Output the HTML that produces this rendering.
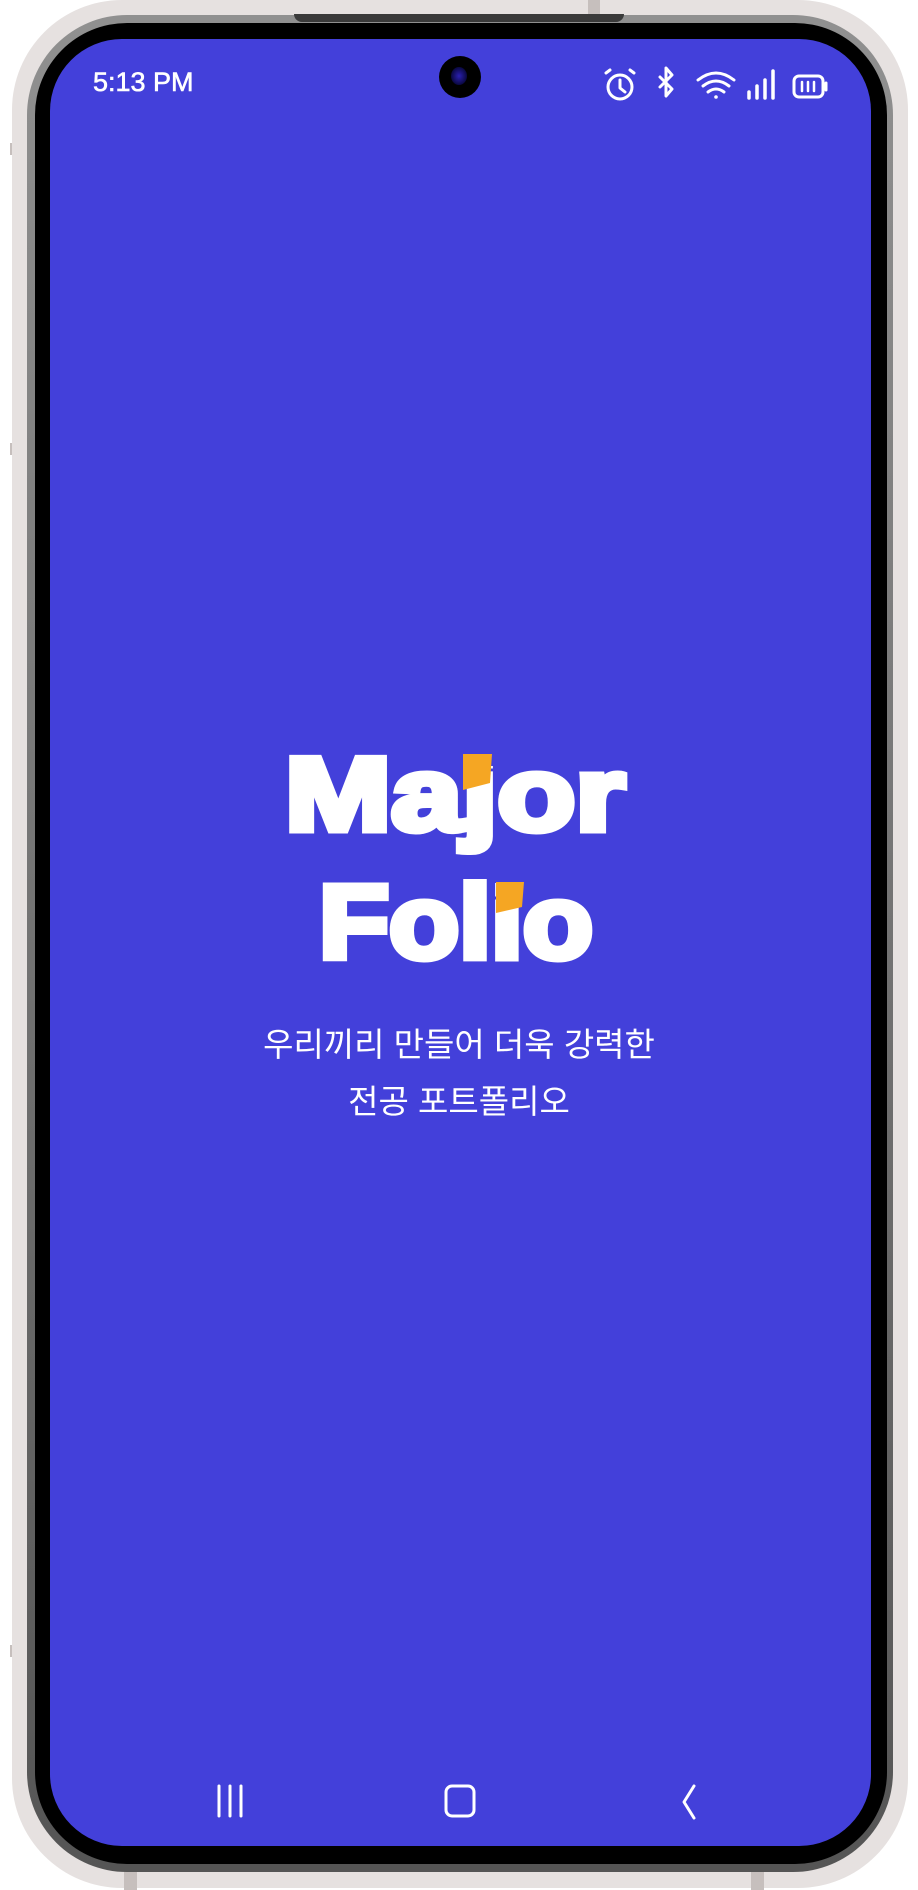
<!DOCTYPE html>
<html><head><meta charset="utf-8"><style>
html,body{margin:0;padding:0;background:#fff;}
body{width:918px;height:1890px;position:relative;overflow:hidden;font-family:"Liberation Sans","Noto Sans CJK KR",sans-serif;}
.a{position:absolute;}
</style></head><body>
<div class="a" style="left:10px;top:143px;width:18px;height:12px;background:#c6bfbd"></div>
<div class="a" style="left:10px;top:443px;width:18px;height:12px;background:#c6bfbd"></div>
<div class="a" style="left:10px;top:1645px;width:18px;height:12px;background:#c6bfbd"></div>
<div class="a" style="left:894px;top:480px;width:14px;height:236px;background:#b5adab;border-radius:3px"></div>
<div class="a" style="left:894px;top:816px;width:14px;height:120px;background:#b5adab;border-radius:3px"></div>
<div class="a" style="left:12px;top:0;width:896px;height:1888px;background:#e6e1e0;border-radius:110px"></div>
<div class="a" style="left:588px;top:0;width:12px;height:16px;background:#c6bfbd"></div>
<div class="a" style="left:124px;top:1870px;width:13px;height:20px;background:#c6bfbd"></div>
<div class="a" style="left:751px;top:1870px;width:13px;height:20px;background:#c6bfbd"></div>
<div class="a" style="left:27px;top:15px;width:866px;height:1857px;background:linear-gradient(#909090,#555);border-radius:100px"></div>
<div class="a" style="left:294px;top:14px;width:330px;height:8px;background:#3a3a3a;border-radius:0 0 14px 14px"></div>
<div class="a" style="left:35px;top:23px;width:852px;height:1841px;background:#000;border-radius:92px"></div>
<div class="a" style="left:50px;top:39px;width:821px;height:1807px;background:#4340da;border-radius:72px;overflow:hidden"></div>
<div class="a" style="left:439px;top:56px;width:42px;height:42px;background:#000;border-radius:50%"></div>
<div class="a" style="left:451px;top:67px;width:16px;height:18px;background:radial-gradient(#2a1fb0,#0a0840 70%);border-radius:50%"></div>
<div class="a" style="left:93px;top:67px;color:#fff;font-size:27px;-webkit-text-stroke:0.6px #fff">5:13 PM</div>
<svg class="a" style="left:601px;top:64px" width="240" height="42" viewBox="0 0 240 42" fill="none" stroke="#fff" stroke-width="3" stroke-linecap="round" stroke-linejoin="round">
 <circle cx="19" cy="23" r="12"/><path d="M19 16v8l5 4"/><path d="M5 9l4-3M33 9l-4-3"/>
 <path d="M59 13l12 12-6 7V4l6 7-12 12"/>
 <path d="M97 16q18-14 36 0M102 22q13-10 26 0M107 28q8-6 16 0"/><circle cx="115" cy="33" r="1.8" fill="#fff" stroke="none"/>
 <path d="M148 34v-6M156 34v-12M164 34v-18M172 34V7" stroke-width="3.5"/>
 <rect x="193" y="12" width="29" height="21" rx="5"/><path d="M225 19v7" stroke-width="3"/><path d="M201 18v9M207 18v9M213 18v9" stroke-width="2.5"/>
</svg>
<svg class="a" style="left:270px;top:740px" width="380" height="240" viewBox="0 0 380 240">
 <g fill="#fff" stroke="#fff" stroke-width="7" stroke-linejoin="miter" font-family="Liberation Sans" font-weight="bold" font-size="104">
 <text x="15" y="90" textLength="340" lengthAdjust="spacingAndGlyphs">Major</text>
 <text x="49" y="218" textLength="274" lengthAdjust="spacingAndGlyphs">Folio</text>
 </g>
 <rect x="186" y="0" width="46" height="15" fill="#4340da"/>
 <rect x="221" y="14" width="11" height="12" fill="#4340da"/>
 <rect x="218" y="128" width="44" height="15" fill="#4340da"/>
 <polygon points="193,14 222,14 220,43 193,50" fill="#f5a623"/>
 <polygon points="226,142 254,142 252,167 226,173" fill="#f5a623"/>
</svg>
<div class="a" style="left:0;top:1016px;width:918px;text-align:center;color:#fff;font-size:33px;line-height:57px;font-family:'Liberation Sans','Noto Sans CJK KR',sans-serif">우리끼리 만들어 더욱 강력한<br>전공 포트폴리오</div>
<svg class="a" style="left:200px;top:1775px" width="520" height="50" viewBox="0 0 520 50" fill="none" stroke="#fff" stroke-width="3" stroke-linecap="round" stroke-linejoin="round">
 <path d="M19 11v30M30 11v30M41 11v30"/>
 <rect x="246" y="11" width="28" height="30" rx="6"/>
 <path d="M494 11l-10 16 10 16"/>
</svg>
</body></html>
